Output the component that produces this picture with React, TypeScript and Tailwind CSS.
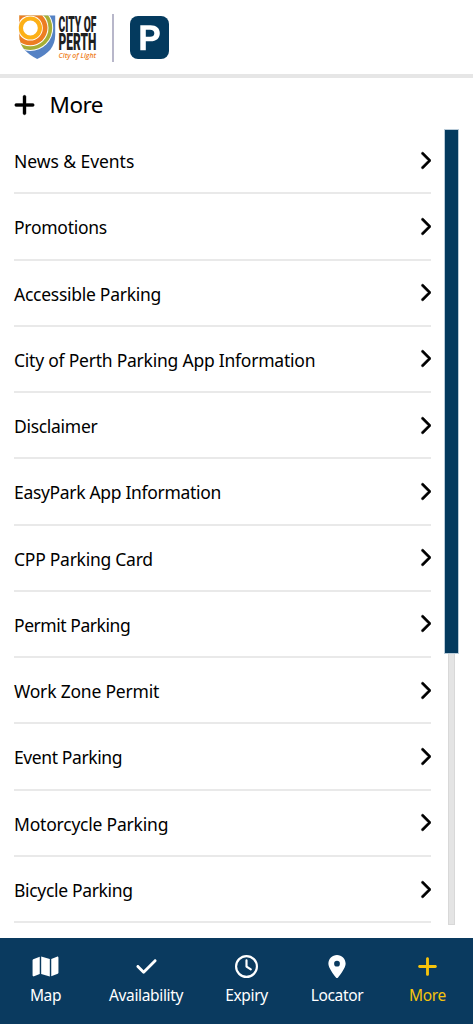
import { FaCheck, FaChevronRight, FaLocationDot, FaMap, FaPlus, FaRegClock } from "react-icons/fa6";

const menuItems = [
  { label: "News & Events", tracking: "tracking-[-0.05px]" },
  { label: "Promotions", tracking: "tracking-[-0.27px]" },
  { label: "Accessible Parking", tracking: "tracking-[-0.27px]" },
  { label: "City of Perth Parking App Information", tracking: "tracking-[-0.23px]" },
  { label: "Disclaimer", tracking: "tracking-[-0.3px]" },
  { label: "EasyPark App Information", tracking: "tracking-[-0.32px]" },
  { label: "CPP Parking Card", tracking: "tracking-[-0.26px]" },
  { label: "Permit Parking", tracking: "tracking-[-0.45px]" },
  { label: "Work Zone Permit", tracking: "tracking-[-0.2px]" },
  { label: "Event Parking", tracking: "tracking-[-0.4px]" },
  { label: "Motorcycle Parking", tracking: "tracking-[-0.21px]" },
  { label: "Bicycle Parking", tracking: "tracking-[-0.33px]" },
];

const tabs = [
  { label: "Map", icon: FaMap, width: "w-[91px]", iconSize: "h-[23px] w-[27px]" },
  { label: "Availability", icon: FaCheck, width: "w-[110px]", iconSize: "h-[23px] w-[23px]" },
  { label: "Expiry", icon: FaRegClock, width: "w-[91px]", iconSize: "h-[23px] w-[23px]" },
  { label: "Locator", icon: FaLocationDot, width: "w-[90px]", iconSize: "h-[23px] w-[18px]" },
  { label: "More", icon: FaPlus, width: "w-[91px]", iconSize: "h-[23px] w-[23px]", active: true },
];

const CityLogo = () => (
  <svg className="block h-[50px] w-[80px] overflow-visible" viewBox="0 0 80 50">
    <defs>
      <clipPath id="shield">
        <path d="M0.3 1.5H36.2V21C36.2 33 29 40 18.2 45C8 40 0.3 33 0.3 21Z" />
      </clipPath>
    </defs>
    <g clipPath="url(#shield)">
      <rect width="37" height="46" fill="#5582c4" />
      <circle cx="11.2" cy="14" r="23" fill="#fff" />
      <circle cx="11.2" cy="14" r="22" fill="#a5ae35" />
      <circle cx="11.2" cy="14" r="18.3" fill="#fff" />
      <circle cx="11.2" cy="14" r="17.3" fill="#ec7d22" />
      <circle cx="11.2" cy="14" r="12.6" fill="#fff" />
    </g>
    <circle cx="11.4" cy="14" r="9.5" fill="#fff" stroke="#fcb017" strokeWidth="4.2" />
    <g fontFamily="Roboto, sans-serif" fontWeight="900" fill="#202020" fontSize="22">
      <text x="39.6" y="17.6" textLength="37.8" lengthAdjust="spacingAndGlyphs">
        CITY OF
      </text>
      <text x="39.6" y="36" fontSize="23" textLength="37.8" lengthAdjust="spacingAndGlyphs">
        PERTH
      </text>
    </g>
    <text
      x="39.6"
      y="44.3"
      fontFamily="Open Sans, sans-serif"
      fontStyle="italic"
      fontWeight="600"
      fontSize="7.6"
      fill="#ef8022"
      textLength="37.5"
      lengthAdjust="spacingAndGlyphs"
    >
      City of Light
    </text>
  </svg>
);

const ParkingLogo = () => (
  <svg className="block h-[43px] w-[39px]" viewBox="0 0 39 43">
    <rect width="39" height="43" rx="8" fill="#043a5e" />
    <path
      d="M10.3 9.2H20.5C26.5 9.2 29.8 12.3 29.8 17.2C29.8 22.2 26.4 25.3 20.5 25.3H15.8V34.2H10.3ZM15.8 13.7V20.8H20C22.8 20.8 24.3 19.6 24.3 17.2C24.3 14.9 22.8 13.7 20 13.7Z"
      fill="#fff"
      fillRule="evenodd"
    />
  </svg>
);

const Header = () => (
  <header className="flex h-[78px] items-start border-b-[4px] border-[#e6e6e6] pl-[19px]">
    <div className="mt-[14px]">
      <CityLogo />
    </div>
    <div className="ml-[13px] mt-[14px] h-[48px] w-[2px] bg-[#b8b7ca]" />
    <div className="ml-[15.5px] mt-[15.5px]">
      <ParkingLogo />
    </div>
  </header>
);

const App = () => {
  return (
    <div className="flex h-screen flex-col overflow-hidden bg-white font-['Noto_Sans',sans-serif] text-black">
      <Header />

      <div className="flex h-[50px] shrink-0 items-center pl-[12.5px] pt-[3px]">
        <FaPlus className="h-[24px] w-[23px] stroke-black stroke-[8px]" />
        <h1 className="ml-[14px] pt-[1px] text-[22.5px] leading-[30px] tracking-[-0.5px]">More</h1>
      </div>

      <main className="flex min-h-0 flex-1">
        <ul className="ml-[14px] w-[416.5px]">
          {menuItems.map(({ label, tracking }) => (
            <li
              key={label}
              className="flex h-[66.27px] items-center justify-between border-b-2 border-[#e9e9e9]"
            >
              <span className={`whitespace-nowrap pt-[2px] text-[17.5px] ${tracking}`}>{label}</span>
              <FaChevronRight className="h-[19px] w-[12px] stroke-black stroke-[14px]" />
            </li>
          ))}
        </ul>
        <div className="ml-[13px] flex w-[15px] flex-col items-center pt-[1px]">
          <div className="h-[525px] w-[15px] shrink-0 border border-[#b9cbd8] bg-[#043a5e]" />
          <div className="h-[271px] w-[7px] shrink-0 border-x border-b border-[#d8d8d8] bg-[#e4e4e4]" />
        </div>
      </main>

      <nav className="flex h-[86px] shrink-0 bg-[#0a3a5f] pt-[17px]">
        {tabs.map(({ label, icon: Icon, width, iconSize, active }) => (
          <div
            key={label}
            className={`flex shrink-0 flex-col items-center ${width} ${active ? "text-[#f6c30c]" : "text-white"}`}
          >
            <Icon className={iconSize} />
            <span className="mt-[6px] text-[15.5px] leading-[22px] tracking-[-0.35px]">{label}</span>
          </div>
        ))}
      </nav>
    </div>
  );
};

export default App;
